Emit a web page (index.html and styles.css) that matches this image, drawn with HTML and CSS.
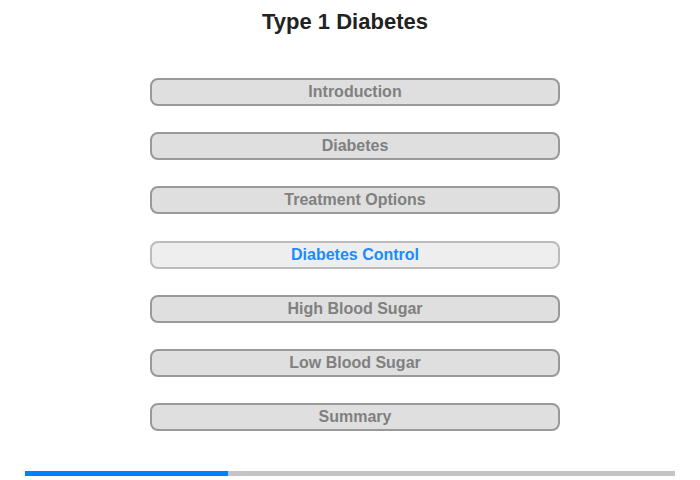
FILE: index.html
```html
<!DOCTYPE html>
<html>
<head>
<meta charset="utf-8">
<link rel="stylesheet" href="styles.css">
</head>
<body>
<div class="page">
  <h1 class="title">Type 1 Diabetes</h1>
  <nav class="menu">
    <div class="item">Introduction</div>
    <div class="item">Diabetes</div>
    <div class="item">Treatment Options</div>
    <div class="item active">Diabetes Control</div>
    <div class="item">High Blood Sugar</div>
    <div class="item">Low Blood Sugar</div>
    <div class="item">Summary</div>
  </nav>
  <div class="progress"><div class="progress-fill" style="width:203px"></div></div>
</div>
</body>
</html>
```
FILE: styles.css
```css
html, body {
  margin: 0;
  padding: 0;
  background: #ffffff;
}
body {
  font-family: "Liberation Sans", Arial, sans-serif;
}
.page {
  width: 700px;
  height: 480px;
  display: flex;
  flex-direction: column;
}
.title {
  margin: 0;
  padding: 10px 10px 0 0;
  font-size: 22px;
  line-height: 24px;
  font-weight: bold;
  color: #222222;
  text-align: center;
}
.menu {
  margin-top: 44px;
  padding-left: 150px;
  display: flex;
  flex-direction: column;
  gap: 26.2px;
}
.item {
  box-sizing: border-box;
  width: 410px;
  height: 28px;
  border: 2px solid #999999;
  border-radius: 8px;
  background: #dfdfdf;
  color: #808080;
  font-size: 16px;
  font-weight: bold;
  display: flex;
  align-items: center;
  justify-content: center;
}
.item.active {
  background: #eeeeee;
  border-color: #bbbbbb;
  color: #1a8cff;
}
.progress {
  margin: 40px 0 0 25px;
  width: 650px;
  height: 5px;
  background: #c4c4c4;
}
.progress-fill {
  height: 100%;
  background: #0080ff;
}
```
